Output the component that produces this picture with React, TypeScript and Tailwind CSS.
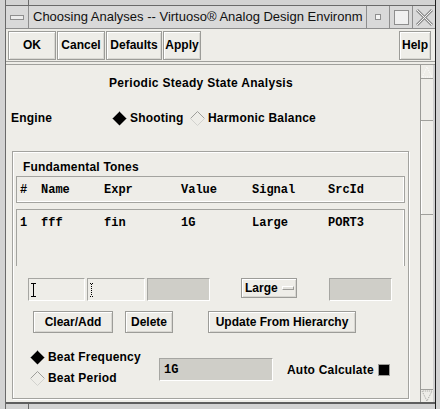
import React from "react";

const Btn = ({ children, className = "" }: { children: React.ReactNode; className?: string }) => (
  <div
    className={`flex items-center justify-center border border-[#9c9c98] bg-[#eeede8] shadow-[inset_1px_1px_0_#ffffff,inset_-1px_-1px_0_#d8d7d2] font-bold text-[12px] text-black ${className}`}
  >
    {children}
  </div>
);

const Diamond = ({ on }: { on: boolean }) => (
  <svg width="15" height="15" viewBox="0 0 15 15" className="shrink-0">
    {on ? (
      <>
        <polygon points="7.5,0.5 14.5,7.5 7.5,14.5 0.5,7.5" fill="#000" />
        <polyline points="0.5,7.5 7.5,0.5 14.5,7.5" fill="none" stroke="#8c8c8c" strokeWidth="1" />
      </>
    ) : (
      <>
        <polyline points="0.5,7.5 7.5,0.5 14.5,7.5" fill="none" stroke="#9e9e9a" strokeWidth="1" />
        <polyline points="0.5,7.5 7.5,14.5 14.5,7.5" fill="none" stroke="#d2d2ce" strokeWidth="1" />
      </>
    )}
  </svg>
);

const Field = ({ className = "", children }: { className?: string; children?: React.ReactNode }) => (
  <div
    className={`border border-t-[#a6a6a2] border-l-[#a6a6a2] border-b-[#ffffff] border-r-[#ffffff] flex items-center ${className}`}
  >
    {children}
  </div>
);

export default function App() {
  const sans = "font-['Liberation_Sans',Arial,sans-serif]";
  const mono = "font-['Liberation_Mono','Courier_New',monospace] font-bold text-[12px]";
  return (
    <div className={`w-[440px] h-[409px] bg-[#d3d3d3] overflow-hidden ${sans} text-black`}>
      <div className="flex h-full">
        {/* left frame */}
        <div className="w-[6px] border-r border-[#6a6a6a]" />
        <div className="w-[429px] flex flex-col">
          {/* top frame strip */}
          <div className="h-[6px] border-b border-[#6a6a6a] flex">
            <div className="w-[23px] border-r border-[#6a6a6a]" />
          </div>
          {/* title bar */}
          <div className="h-[23px] flex bg-[#d9d9d9] border-b border-[#8e8e8e]">
            <div className="w-[23px] border-r border-[#8e8e8e] flex items-center justify-center">
              <div className="w-[14px] h-[5px] border border-[#8e8e8e] bg-[#ececec]" />
            </div>
            <div className="flex-1 overflow-hidden whitespace-nowrap pl-[4px] text-[13px] leading-[22px] text-[#111]">
              Choosing Analyses -- Virtuoso® Analog Design Environm
            </div>
            <div className="w-[23px] border-l border-[#8e8e8e] flex items-center justify-center">
              <div className="w-[6px] h-[6px] border border-[#8e8e8e] bg-[#f4f4f4]" />
            </div>
            <div className="w-[23px] border-l border-[#8e8e8e] flex items-center justify-center">
              <div className="w-[15px] h-[15px] border border-[#8e8e8e] bg-[#f0f0f0]" />
            </div>
            <div className="w-[23px] border-l border-[#8e8e8e] flex items-center justify-center">
              <svg width="19" height="19" viewBox="0 0 19 19">
                <path d="M2 2 L17 17 M17 2 L2 17" stroke="#8e8e8e" strokeWidth="3" />
                <path d="M2 2 L17 17 M17 2 L2 17" stroke="#f4f4f4" strokeWidth="1" />
              </svg>
            </div>
          </div>
          {/* dialog body */}
          <div className="flex-1 flex flex-col bg-[#eeede8] border-b-2 border-[#5e5e5e]">
            {/* button row */}
            <div className="h-[33px] flex items-center pl-[2px] pr-[4px] border-b border-[#a0a09c]">
              <Btn className="w-[48px] h-[29px]">OK</Btn>
              <Btn className="w-[48px] h-[29px] ml-[1px]">Cancel</Btn>
              <Btn className="w-[56px] h-[29px] ml-[1px]">Defaults</Btn>
              <Btn className="w-[38px] h-[29px] ml-[1px]">Apply</Btn>
              <div className="flex-1" />
              <Btn className="w-[32px] h-[29px]">Help</Btn>
            </div>
            <div className="h-[3px] border-b border-[#a0a09c]" />
            {/* scrolled area */}
            <div className="flex-1 flex">
              <div className="flex-1 flex flex-col border-r border-[#9a9a96]">
                <div className="pl-[103px] pt-[11px] h-[29px] font-bold text-[12px] leading-[14px] tracking-[0.3px]">
                  Periodic Steady State Analysis
                </div>
                <div className="h-[24px] mt-[12px] flex items-center text-[12px] font-bold tracking-[0.2px]">
                  <div className="pl-[5px] w-[106px]">Engine</div>
                  <Diamond on />
                  <div className="ml-[3px] w-[60px]">Shooting</div>
                  <Diamond on={false} />
                  <div className="ml-[3px]">Harmonic Balance</div>
                </div>
                {/* group box */}
                <div className="mt-[21px] ml-[6px] w-[397px] flex-1 border border-[#a3a39f] shadow-[inset_1px_1px_0_#ffffff,1px_1px_0_#ffffff] flex flex-col">
                  <div className="pl-[10px] pt-[8px] h-[24px] text-[12px] font-bold leading-[14px] tracking-[0.2px]">
                    Fundamental Tones
                  </div>
                  <div className="mx-[3px] h-[27px] border border-[#a3a39f] shadow-[inset_-1px_-1px_0_#ffffff] flex items-center">
                    <div className={`${mono} flex pt-[1px]`}>
                      <span className="pl-[3px] w-[24px]">#</span>
                      <span className="w-[63px]">Name</span>
                      <span className="w-[77px]">Expr</span>
                      <span className="w-[71px]">Value</span>
                      <span className="w-[76px]">Signal</span>
                      <span>SrcId</span>
                    </div>
                  </div>
                  <div className="mx-[3px] mt-[6px] h-[57px] border border-[#a3a39f] border-b-0 shadow-[inset_-1px_0_0_#ffffff]">
                    <div className={`${mono} flex pt-[4px]`}>
                      <span className="pl-[3px] w-[24px]">1</span>
                      <span className="w-[63px]">fff</span>
                      <span className="w-[77px]">fin</span>
                      <span className="w-[71px]">1G</span>
                      <span className="w-[76px]">Large</span>
                      <span>PORT3</span>
                    </div>
                  </div>
                  {/* inputs */}
                  <div className="flex items-start mt-[12px] pl-[15px] h-[23px]">
                    <Field className="w-[57px] h-[23px] pl-[2px]">
                      <svg width="6" height="14" viewBox="0 0 6 14">
                        <path d="M0 0.5 H5 M2.5 0.5 V13.5 M0 13.5 H5" stroke="#000" strokeWidth="1" />
                      </svg>
                    </Field>
                    <Field className="w-[58px] h-[23px] ml-[2px] pl-[2px]">
                      <svg width="4" height="14" viewBox="0 0 4 14">
                        <path d="M0 0.5 H3 M1.5 1 V13 M0 13.5 H3" stroke="#000" strokeWidth="1" strokeDasharray="1 1" />
                      </svg>
                    </Field>
                    <Field className="w-[63px] h-[23px] ml-[2px] bg-[#cfcec8]" />
                    <Btn className="w-[56px] h-[20px] ml-[31px] justify-start pl-[3px]">
                      Large
                      <span className="ml-[4px] w-[12px] h-[4px] border border-t-[#ffffff] border-l-[#ffffff] border-b-[#9c9c98] border-r-[#9c9c98] bg-[#e4e3de]" />
                    </Btn>
                    <Field className="w-[63px] h-[23px] ml-[32px] bg-[#cfcec8]" />
                  </div>
                  <div className="flex items-center mt-[10px] pl-[20px] h-[22px]">
                    <Btn className="w-[80px] h-[22px]">Clear/Add</Btn>
                    <Btn className="w-[48px] h-[22px] ml-[12px]">Delete</Btn>
                    <Btn className="w-[148px] h-[22px] ml-[35px]">Update From Hierarchy</Btn>
                  </div>
                  <div className="flex mt-[14px] pl-[17px]">
                    <div className="flex flex-col w-[129px] text-[12px] font-bold tracking-[0.2px]">
                      <div className="flex items-center h-[20px]">
                        <Diamond on />
                        <span className="ml-[3px]">Beat Frequency</span>
                      </div>
                      <div className="flex items-center h-[22px]">
                        <Diamond on={false} />
                        <span className="ml-[3px]">Beat Period</span>
                      </div>
                    </div>
                    <Field className={`w-[114px] h-[23px] mt-[11px] bg-[#cfcec8] pl-[4px] ${mono}`}>1G</Field>
                    <div className="flex items-center mt-[11px] h-[23px] ml-[14px] text-[12px] font-bold tracking-[0.2px]">
                      Auto Calculate
                      <span className="ml-[4px] w-[12px] h-[12px] bg-black border border-[#9c9c98]" />
                    </div>
                  </div>
                </div>
                <div className="h-[3px]" />
              </div>
              {/* scrollbar */}
              <div className="w-[14px] bg-[#eeede8] flex flex-col border-r-[2px] border-[#d0d0d0]">
                <div className="h-[13px] flex items-center justify-center">
                  <svg width="12" height="12" viewBox="0 0 12 12">
                    <path d="M6 1 L1 11 L11 11 Z" fill="none" stroke="#ffffff" strokeDasharray="1 1" />
                  </svg>
                </div>
                <div className="h-[42px] border-t border-[#a0a09c]" />
                <div className="h-[95px] border-y border-[#a0a09c] bg-[#eeede8] shadow-[inset_1px_0_0_#ffffff]" />
                <div className="flex-1" />
                <div className="h-[13px] flex items-center justify-center border-t border-[#a0a09c]">
                  <svg width="12" height="12" viewBox="0 0 12 12">
                    <path d="M6 11 L1 1 L11 1 Z" fill="none" stroke="#a0a09c" strokeDasharray="1 1" />
                  </svg>
                </div>
              </div>
            </div>
          </div>
          <div className="h-[5px] flex">
            <div className="w-[23px] border-r border-[#6a6a6a]" />
          </div>
        </div>
        <div className="flex-1 border-l border-[#202020]" />
      </div>
    </div>
  );
}
